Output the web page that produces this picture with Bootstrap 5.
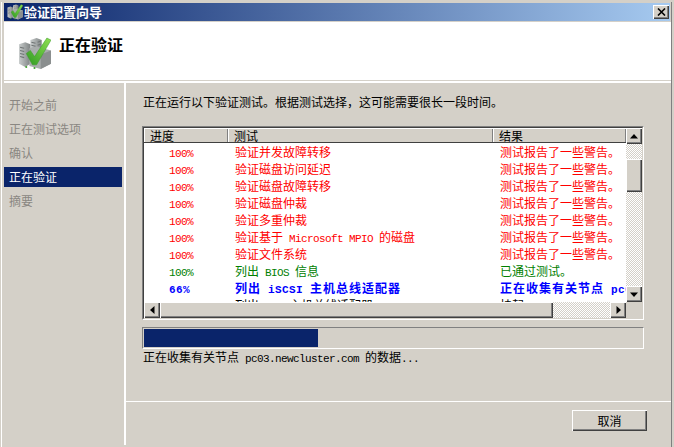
<!DOCTYPE html>
<html lang="zh-CN">
<head>
<meta charset="utf-8">
<title>验证配置向导</title>
<link rel="stylesheet" href="https://cdn.jsdelivr.net/npm/bootstrap@5.3.0/dist/css/bootstrap.min.css">
<style>
html,body{height:447px;overflow:hidden}
body{background:#d4d0c8;color:#000;font:12px/14px "Noto Sans CJK SC",sans-serif}
.lat{font-family:"Liberation Mono",monospace;font-size:11px;letter-spacing:-.6px;line-height:1}
.winframe{height:445px;margin:2px 2px 0 1px;padding:1px 0 0 2px;border-left:1px solid #fff;border-right:1px solid #808080}
.titlebar{height:18px;margin-right:1px;padding:0 1px 0 3px;background:linear-gradient(90deg,#0a246a,#a6caf0);color:#fff;font-size:13px;font-weight:700;line-height:18px}
.titlebar svg.tico{margin-right:1px}
.closebox{width:16px;height:14px;background:#d4d0c8;box-shadow:inset 1px 1px #fff,inset -1px -1px #404040,inset -2px -2px #808080}
.headbar{height:58px;margin-top:1px;background:#fff;padding-left:14px;gap:8px}
.headbar h1{font-size:16px;font-weight:700;line-height:20px;margin:-14px 0 0}
.headrule{height:3px;border-top:1px solid #d4d0c8;background:#fff}
.mainarea{height:362px}
.sidepane{width:120px;padding-top:12px;flex:none}
.list-group-item.sideitem,.list-group-item+.list-group-item.sideitem.active{width:118px;height:20px;padding:3px 0 3px 5px;border:0;border-radius:0;background:transparent;color:#8a8782;line-height:14px;margin:0 0 4px}
.list-group-item+.list-group-item.sideitem.active{background:#0a246a;color:#fff}
.workpane{border-left:2px solid #fff;min-width:0;flex:1}
.workbody{height:318px;padding:12px 27px 0 16px}
.intro{margin:0 0 17px 1px}
.sunken{height:194px;border:1px solid;border-color:#808080 #fff #fff #808080}
.sunken-in{height:192px;border:1px solid;border-color:#404040 #d4d0c8 #d4d0c8 #404040;background:#fff}
.viewport{width:482px;height:174px;overflow:hidden;background:#fff}
.runtable.table{table-layout:fixed;width:482px;margin:0;--bs-table-bg:transparent}
.runtable.table tr{height:17px}
.runtable.table th,.runtable.table td{padding:0 0 0 7px;border:0;box-shadow:none;background:transparent;color:inherit;white-space:nowrap;overflow:hidden;height:17px;line-height:15px;font-weight:inherit;vertical-align:middle}
.runtable.table thead tr{height:15px}
.runtable.table th{height:15px;line-height:13px;background:#d4d0c8;color:#000;font-weight:400;padding-left:6px;box-shadow:inset 0 -1px #404040,inset 0 1px #fff,inset -1px 0 #808080,inset 1px 0 #fff}
.runtable.table td.pct{padding-left:25px}
.row-warn{color:#f00}
.row-ok{color:#008000}
.row-run{color:#00f;font-weight:700;letter-spacing:1px}
.row-run .lat{letter-spacing:.4px}
.row-wait{color:#000}
.sb-track{background:repeating-conic-gradient(#d4d0c8 0 25%,#fff 0 50%) 0 0/2px 2px}
.sb-v{width:16px}
.sb-h{height:16px;width:482px}
.sb-btn{width:16px;height:16px;flex:none;background:#d4d0c8;box-shadow:inset 1px 1px #fff,inset -1px -1px #404040,inset -2px -2px #808080}
.sb-gap{height:15px;flex:none}
.sb-thumb-v{height:33px;flex:none;background:#d4d0c8;box-shadow:inset 1px 1px #fff,inset -1px -1px #404040,inset -2px -2px #808080}
.sb-thumb-h{width:393px;flex:none;background:#d4d0c8;box-shadow:inset 1px 1px #fff,inset -1px -1px #404040,inset -2px -2px #808080}
.sb-corner{width:16px;height:16px;background:#d4d0c8}
.meter.progress{height:22px;margin-top:7px;padding:1px;background:transparent;border:1px solid;border-color:#808080 #fff #fff #808080;border-radius:0}
.meter .progress-bar{background:#0a246a}
.status{margin:1px 0 0 1px}
.footbar{height:44px;border-top:1px solid #fff;padding:8px 24px 0 0}
.cancelbtn.btn{width:75px;height:21px;padding:0;border:0;border-radius:0;background:#d4d0c8;color:#000;font-size:12px;line-height:21px;box-shadow:inset 1px 1px #fff,inset -1px -1px #404040,inset -2px -2px #808080}
</style>
</head>
<body>
<svg width="0" height="0" class="d-block" aria-hidden="true">
  <defs>
    <linearGradient id="srv" x1="0" y1="0" x2="1" y2="0"><stop offset="0" stop-color="#c8cccc"/><stop offset="1" stop-color="#7f8484"/></linearGradient>
    <linearGradient id="grn" x1="0" y1="1" x2="1" y2="0"><stop offset="0" stop-color="#2f9a22"/><stop offset="1" stop-color="#8fe052"/></linearGradient>
    <symbol id="wizico" viewBox="0 0 32 32">
      <path d="M12 3l6-2 5 2v20l-5 2-6-2z" fill="url(#srv)"/>
      <path d="M1 7l6-2 5 2v19l-5 3-6-3z" fill="url(#srv)"/>
      <path d="M11 11l6-2 15 4v13l-10 5-11-3z" fill="#a9adad"/>
      <path d="M22 17l10-4v13l-10 5z" fill="#8b8f8f"/>
      <path d="M2 10l4 1M2 13l4 1M2 16l4 1M2 19l4 1M13 5l4 1M13 8l4 1M19 5l3-1M19 8l3-1" stroke="#6f7474" stroke-width="1"/>
      <path d="M8 16l4-3 4 6L28 1l4 2-14 24h-4z" fill="url(#grn)" stroke="#3b9a2a" stroke-width=".5"/>
      <circle cx="8" cy="29" r="1" fill="#3fa02c"/><circle cx="16" cy="30" r="1" fill="#3fa02c"/>
    </symbol>
  </defs>
</svg>
<div class="winframe">
  <div class="titlebar d-flex align-items-center">
    <svg width="16" height="16" class="flex-shrink-0 tico"><use href="#wizico"/></svg>
    <span class="flex-grow-1">验证配置向导</span>
    <span class="closebox d-flex align-items-center justify-content-center">
      <svg width="9" height="8" viewBox="0 0 9 8"><path d="M1 .5l7 7M8 .5l-7 7" stroke="#000" stroke-width="1.6"/></svg>
    </span>
  </div>
  <div class="headbar d-flex align-items-center">
    <svg width="33" height="33" class="flex-shrink-0 mt-1"><use href="#wizico"/></svg>
    <h1>正在验证</h1>
  </div>
  <div class="headrule"></div>
  <div class="mainarea d-flex">
    <div class="sidepane">
      <div class="list-group list-group-flush">
        <div class="list-group-item sideitem">开始之前</div>
        <div class="list-group-item sideitem">正在测试选项</div>
        <div class="list-group-item sideitem">确认</div>
        <div class="list-group-item sideitem active">正在验证</div>
        <div class="list-group-item sideitem">摘要</div>
      </div>
    </div>
    <div class="workpane d-flex flex-column">
      <div class="workbody">
        <p class="intro">正在运行以下验证测试。根据测试选择，这可能需要很长一段时间。</p>
        <div class="sunken">
          <div class="sunken-in d-flex flex-column">
            <div class="d-flex">
              <div class="viewport">
                <table class="table runtable">
                  <colgroup><col style="width:84px"><col style="width:265px"><col style="width:133px"></colgroup>
                  <thead><tr><th>进度</th><th>测试</th><th>结果</th></tr></thead>
                  <tbody>
                    <tr class="row-warn"><td class="pct"><span class="lat">100%</span></td><td>验证并发故障转移</td><td>测试报告了一些警告。</td></tr>
                    <tr class="row-warn"><td class="pct"><span class="lat">100%</span></td><td>验证磁盘访问延迟</td><td>测试报告了一些警告。</td></tr>
                    <tr class="row-warn"><td class="pct"><span class="lat">100%</span></td><td>验证磁盘故障转移</td><td>测试报告了一些警告。</td></tr>
                    <tr class="row-warn"><td class="pct"><span class="lat">100%</span></td><td>验证磁盘仲裁</td><td>测试报告了一些警告。</td></tr>
                    <tr class="row-warn"><td class="pct"><span class="lat">100%</span></td><td>验证多重仲裁</td><td>测试报告了一些警告。</td></tr>
                    <tr class="row-warn"><td class="pct"><span class="lat">100%</span></td><td>验证基于<span class="lat"> Microsoft MPIO </span>的磁盘</td><td>测试报告了一些警告。</td></tr>
                    <tr class="row-warn"><td class="pct"><span class="lat">100%</span></td><td>验证文件系统</td><td>测试报告了一些警告。</td></tr>
                    <tr class="row-ok"><td class="pct"><span class="lat">100%</span></td><td>列出<span class="lat"> BIOS </span>信息</td><td>已通过测试。</td></tr>
                    <tr class="row-run"><td class="pct"><span class="lat">66%</span></td><td>列出<span class="lat"> iSCSI </span>主机总线适配器</td><td>正在收集有关节点<span class="lat"> pc03.newcluster.com</span></td></tr>
                    <tr class="row-wait"><td class="pct"></td><td>列出<span class="lat"> SAS </span>主机总线适配器</td><td>挂起</td></tr>
                  </tbody>
                </table>
              </div>
              <div class="sb-v sb-track d-flex flex-column">
                <div class="sb-btn d-flex align-items-center justify-content-center"><svg width="8" height="5"><path d="M4 0l4 4.5H0z"/></svg></div>
                <div class="sb-gap"></div>
                <div class="sb-thumb-v"></div>
                <div class="flex-grow-1"></div>
                <div class="sb-btn d-flex align-items-center justify-content-center"><svg width="8" height="5"><path d="M4 5L0 .5h8z"/></svg></div>
              </div>
            </div>
            <div class="d-flex">
              <div class="sb-h sb-track d-flex">
                <div class="sb-btn d-flex align-items-center justify-content-center"><svg width="5" height="8"><path d="M0 4l4.5-4v8z"/></svg></div>
                <div class="sb-thumb-h"></div>
                <div class="flex-grow-1"></div>
                <div class="sb-btn d-flex align-items-center justify-content-center"><svg width="5" height="8"><path d="M5 4L.5 0v8z"/></svg></div>
              </div>
              <div class="sb-corner"></div>
            </div>
          </div>
        </div>
        <div class="progress meter"><div class="progress-bar" style="width:35%"></div></div>
        <p class="status mb-0">正在收集有关节点<span class="lat"> pc03.newcluster.com </span>的数据<span class="lat">...</span></p>
      </div>
      <div class="footbar d-flex justify-content-end align-items-start">
        <button type="button" class="btn cancelbtn">取消</button>
      </div>
    </div>
  </div>
</div>
<script src="https://cdn.jsdelivr.net/npm/bootstrap@5.3.0/dist/js/bootstrap.bundle.min.js"></script>
</body>
</html>
